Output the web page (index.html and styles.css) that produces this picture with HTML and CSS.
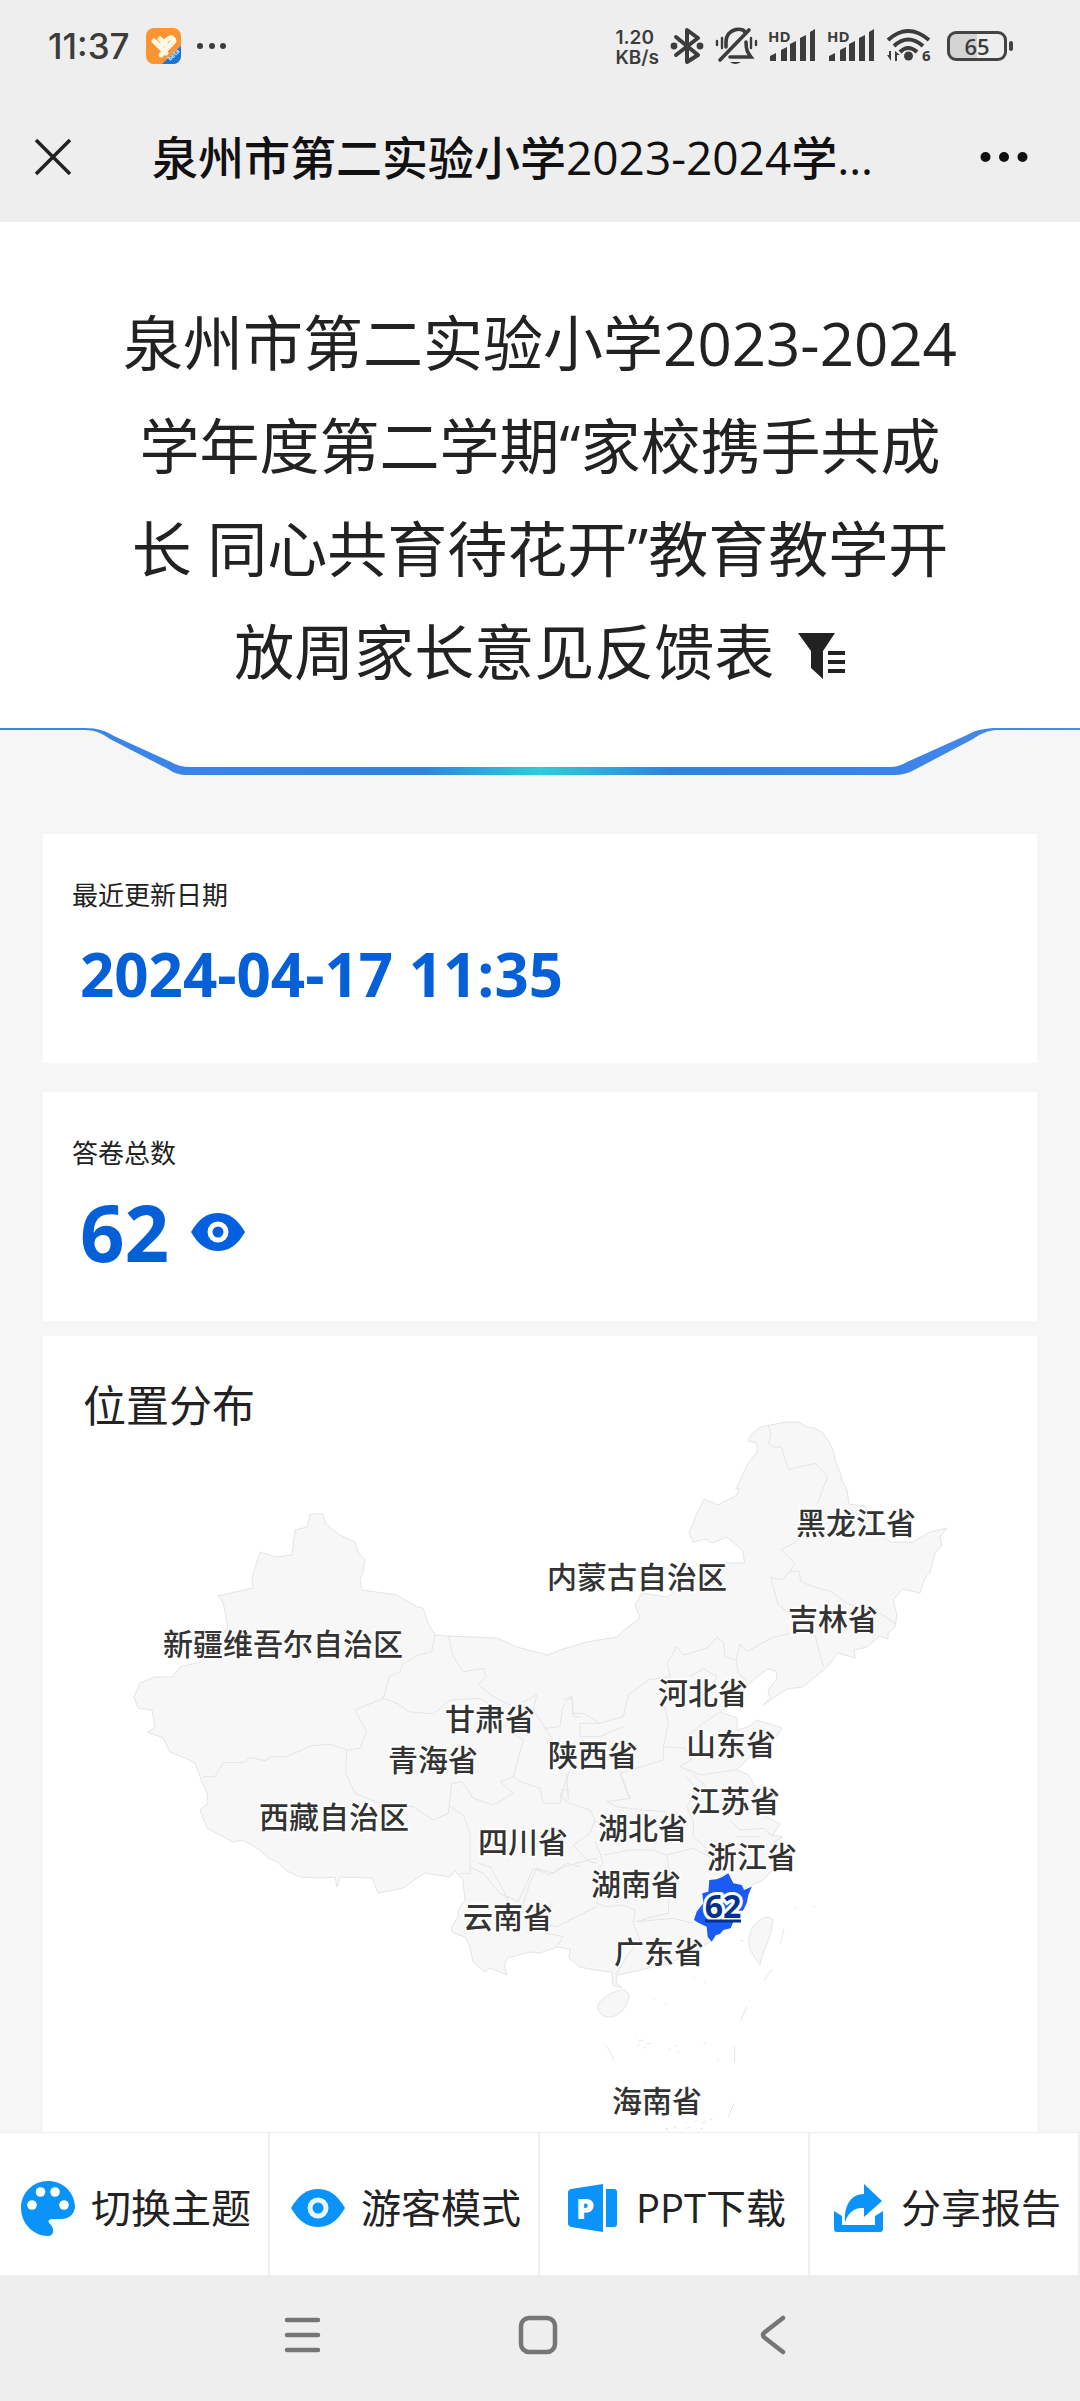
FILE: index.html
```html
<!DOCTYPE html>
<html lang="zh-CN">
<head>
<meta charset="utf-8">
<meta name="viewport" content="width=device-width, initial-scale=1">
<title>泉州市第二实验小学2023-2024学年度第二学期意见反馈表</title>
<link rel="stylesheet" href="styles.css">
</head>
<body>
<div class="status">
  <span class="status-time">11:37</span>
  <svg class="app-icon" viewBox="0 0 35 36" width="35" height="36">
    <defs><clipPath id="app"><rect width="35" height="36" rx="8"/></clipPath></defs>
    <g clip-path="url(#app)"><rect width="35" height="36" fill="#fb9431"/><path d="M15 37 36 17V37Z" fill="#1677d8"/>
    <path d="M8 13 20 25M14 11 22 19M15 27 28 13Q26 7 21 12L14 19" fill="none" stroke="#fff8e6" stroke-width="5" stroke-linecap="round" stroke-linejoin="round"/></g>
    <text class="beta" x="24" y="33" transform="rotate(-43 24 33)">beta</text>
  </svg>
  <svg viewBox="0 0 30 8" width="30" height="8" fill="#3c3c3c"><circle cx="3" cy="4" r="3"/><circle cx="15" cy="4" r="3"/><circle cx="26" cy="4" r="3"/></svg>
  <div class="status-right">
    <span class="speed"><span>1.20</span><span>KB/s</span></span>
    <svg viewBox="0 0 34 38" width="34" height="38"><path d="M6 10 28 28 17 35V3L28 11 6 28" fill="none" stroke="#3c3c3c" stroke-width="4" stroke-linejoin="round" stroke-linecap="round"/><circle cx="4" cy="19" r="3.4" fill="#3c3c3c"/><circle cx="30" cy="19" r="3.4" fill="#3c3c3c"/></svg>
    <svg viewBox="0 0 42 38" width="42" height="38" fill="none" stroke="#3c3c3c" stroke-width="3.6" stroke-linecap="round"><path d="M5 33 34 3M11 20V15C11 0 30 0 30 6M31 15C31 24 33 26 36 30H15"/><path d="M2 14V18M7 11V21M36 11V21M41 14V18" stroke-width="2.4"/><path d="M15 35H26Q20 39 15 35Z" fill="#3c3c3c" stroke="none"/></svg>
    <svg class="signal" viewBox="0 -4 48 44" width="48" height="44"><use href="#bars"/><text x="0" y="14">HD</text></svg>
    <svg class="signal" viewBox="0 -4 48 44" width="48" height="44"><g id="bars"><path d="M2 33V28L8 25V33ZM13 33V22L19 19V33ZM22 33V16L28 13V33ZM32 33V10L38 7V33ZM42 33V4L47 1V33Z"/></g><text x="0" y="14">HD</text></svg>
    <svg class="signal" viewBox="0 -1 46 42" width="46" height="42"><g fill="none" stroke="#3c3c3c" stroke-width="4"><path d="M2 14Q22-4 43 14M8 20Q22 7 37 20M14 26Q22 18 31 26"/></g><circle cx="22.500" cy="30" r="4.500"/><path d="M1 29H3V25H5V35ZM9 35V25L14 29H11V35Z"/><text x="36" y="35">6</text></svg>
    <span class="battery">65</span>
  </div>
</div>

<nav class="titlebar">
  <button class="plain" aria-label="关闭"><svg viewBox="0 0 38 38" width="38" height="38"><path d="M2 2 36 36M36 2 2 36" stroke="#222" stroke-width="3.500"/></svg></button>
  <div class="titlebar-text">泉州市第二实验小学2023-2024学年度第二学期意见反馈表</div>
  <button class="plain" aria-label="更多"><svg viewBox="0 0 48 12" width="48" height="12" fill="#111"><circle cx="5.500" cy="6" r="5"/><circle cx="24" cy="6" r="5"/><circle cx="42.500" cy="6" r="5"/></svg></button>
</nav>

<header class="hero">
  <h1>泉州市第二实验小学2023-2024学年度第二学期“家校携手共成长 同心共育待花开”教育教学开放周家长意见反馈表 <button class="plain filter" aria-label="筛选"><svg viewBox="0 0 48 46" width="48" height="46" fill="#222"><path d="M0 0H37L25 18V46L13 35V18ZM30 18H47V22H30ZM30 27H47V31H30ZM30 36H47V40H30Z"/></svg></button></h1>
</header>
<svg class="hero-edge" viewBox="0 0 1080 50">
  <defs><linearGradient id="edge" gradientUnits="userSpaceOnUse" x1="0" x2="1080" y1="0" y2="0"><stop offset="0" stop-color="#3f87e4"/><stop offset=".18" stop-color="#3a83ea"/><stop offset=".39" stop-color="#2f83de"/><stop offset=".5" stop-color="#28cfdc"/><stop offset=".62" stop-color="#2f83de"/><stop offset=".82" stop-color="#3a83ea"/><stop offset="1" stop-color="#4b8ce4"/></linearGradient></defs>
  <path d="M0 0H1080V3H998C985 3 978 6 970 11L912 37Q903 42 891 42H190Q178 42 170 37L112 11C104 6 98 3 85 3H0Z" fill="#fff"/>
  <path d="M0 2H85C98 2 106 5 114 10L171 36Q179 41 190 41H890Q899 41 907 36L967 9C976 4 984 2 998 2H1080V4H998C988 4 980 8 973 13L916 43Q906 49 894 49H187Q176 49 168 43L110 13C103 8 96 4 85 4H0Z" fill="url(#edge)"/>
</svg>

<main class="report">
  <section class="card stat">
    <h2>最近更新日期</h2>
    <p class="value">2024-04-17 11:35</p>
  </section>
  <section class="card stat">
    <h2>答卷总数</h2>
    <p class="value value-count">62 <button class="plain" aria-label="查看答卷"><svg viewBox="0 0 54 38" width="54" height="38"><path d="M0 19C8 5 17 0 27 0S46 5 54 19C46 33 37 38 27 38S8 33 0 19Z" fill="#0560e0"/><circle cx="27" cy="19" r="10.500" fill="#fff"/><circle cx="27" cy="19" r="5.500" fill="#0560e0"/></svg></button></p>
  </section>
  <section class="card place">
    <h2>位置分布</h2>
    <svg class="map" viewBox="43 1412 994 720" role="img" aria-label="中国地图，福建省 62">
      <g class="land">
        <path d="M310 1514 323 1514 325 1523 333 1530 340 1535 355 1542 358 1552 365 1560 363 1572 360 1580 362 1590 397 1595 417 1607 423 1608 428 1623 435 1635 448 1636 497 1638 517 1647 548 1655 560 1650 587 1642 617 1637 628 1627 640 1618 635 1605 642 1593 667 1597 690 1583 727 1563 745 1563 742 1550 727 1537 712 1543 706 1539 693 1542 689 1533 697 1513 704 1499 718 1505 737 1495 739 1488 736 1489 747 1465 757 1452 757 1443 748 1441 751 1435 760 1427 770 1425 787 1422 798 1422 807 1427 815 1428 823 1433 828 1440 833 1450 835 1460 840 1472 842 1481 847 1490 849 1504 865 1506 873 1520 890 1542 913 1542 930 1532 947 1528 940 1537 942 1545 935 1553 930 1573 925 1578 920 1593 903 1589 893 1600 897 1615 895 1627 888 1633 888 1639 880 1636 867 1647 854 1650 855 1658 838 1653 827 1667 803 1687 787 1689 763 1705 770 1698 768 1690 777 1679 776 1671 768 1669 753 1680 740 1690 730 1705 720 1712 737 1718 737 1730 748 1727 757 1720 782 1728 776 1737 764 1738 747 1760 737 1770 749 1775 753 1783 760 1795 767 1817 780 1824 773 1835 783 1837 774 1842 780 1863 763 1880 752 1885 743 1905 733 1920 718 1932 710 1942 690 1953 670 1963 653 1967 640 1970 627 1973 617 1975 616 1982 622 1988 613 1985 612 1972 595 1970 580 1967 569 1958 570 1949 557 1947 540 1953 530 1952 507 1958 504 1965 507 1975 490 1968 485 1972 473 1962 470 1947 465 1937 453 1933 451 1928 458 1917 458 1910 465 1900 463 1880 458 1875 455 1870 450 1877 425 1873 403 1888 378 1893 372 1878 340 1877 337 1887 335 1877 320 1878 300 1877 287 1871 277 1862 267 1857 260 1850 243 1840 233 1842 207 1828 200 1810 208 1803 207 1793 202 1782 195 1763 185 1758 170 1752 163 1738 147 1732 155 1728 152 1710 138 1708 134 1697 140 1683 155 1677 172 1677 180 1667 200 1662 228 1627 223 1602 218 1596 253 1588 252 1577 260 1552 276 1557 292 1555 295 1530 307 1527Z"/>
        <path d="M612 1993C620 1990 627 1987 629 1996C627 2012 613 2020 604 2016C595 2011 594 2002 612 1993ZM762 1919C770 1914 775 1919 772 1926C770 1940 764 1947 760 1965C752 1954 748 1948 749 1940C750 1929 754 1923 762 1919Z"/>
      </g>
      <g class="borders">
        <g transform="translate(100 1480) scale(.333333)">
          <path d="M1005 465 995 515 955 525 910 550 900 575 868 590 850 655 765 690 800 755 780 805 740 810 690 793 635 797 560 830 515 830 495 842 450 832 430 848 370 848 345 890 310 890M1045 467 1060 530 1090 575 1150 565 1158 590 1135 615 1180 650 1240 680 1310 645 1300 690 1335 745 1380 740 1388 680 1415 648 1420 710 1440 712M850 655 895 672 925 695 1000 702 1050 660 1140 655 1180 680M740 810 737 880 765 940 840 970 940 980 1000 1020 1045 1000 1055 910 1085 905 1120 955 1180 975 1240 940 1200 905 1240 890 1270 780 1240 760M1050 980 1090 1005 1110 1060 1110 1180 1080 1180M1240 890 1260 905 1320 925 1330 970 1380 970 1390 930 1410 930M1110 1160 1150 1180 1200 1240 1255 1265 1280 1210 1300 1165 1350 1185 1400 1150 1440 1160M1335 745 1365 790"/>
        </g>
        <g transform="translate(560 1400) scale(.333333)">
          <path d="M625 75 633 105 625 130 640 140 665 142 685 208 765 190 803 230 772 310M750 395 700 430 663 450 690 475 705 490 690 515 718 515 722 545 760 560 815 575 860 610 915 630 960 640 1005 670M690 515 665 540 632 532 655 615 690 640M690 700 640 712 560 755 540 732 528 780 495 770 490 725 470 712 440 745 370 765 350 740 322 790 330 830 265 840 205 885 190 950 120 970 70 940 40 940 35 890 10 900M765 705 790 800M528 780 535 820 560 840M330 830 310 900 325 970 310 1040 310 1080 180 1120 205 1190M120 970 60 970 60 1010 120 1010 190 980M310 1040 375 1045 395 1080 360 1100 420 1125 530 1110M400 1125 440 1160 395 1190M390 830 430 805 470 830 460 855M380 1010 430 970 480 935M20 1120 25 1200"/>
        </g>
        <g transform="translate(440 1740) scale(.333333)">
          <path d="M390 90 360 170 390 190 450 210 465 240 450 280 400 315 440 360 470 355M540 95 570 175 500 185 530 200 610 210 680 215M460 240 500 260M740 110 770 150 740 200 760 245 760 290 800 325M465 305 480 340 490 370 470 395 480 430 470 490 500 500 550 495 585 510M490 345 570 330 640 330 680 345 690 400 685 520 640 530 590 545M680 345 760 325 810 350M270 430 290 385 340 400 370 380 440 362 470 370M115 370 150 380 190 450 215 510 250 490 270 430M215 510 270 520 290 550 350 560 410 530 470 500M290 550 320 580 370 590 350 620M585 510 580 550 600 600 560 650 530 700M590 545 700 535 760 550M870 240 900 270 970 265 1000 290M890 290 960 290M495 915Q512 930 520 960M972 722 998 686M1022 610 1032 565M902 842 920 800M884 920V968M865 1130 882 1090M900 600 910 603M762 712 766 715M792 725 798 729M675 790H680M640 775 645 778M585 880 588 884M595 905 605 900 612 906M590 918 597 912M620 912 632 910M612 922 618 925M685 925 692 930M705 918 714 916M712 935H716M790 908 798 911M830 957 835 959M675 1168 685 1164M700 1160 710 1165M735 1150 742 1145M765 1145 770 1140M785 1150 797 1145M740 1165 750 1162M780 1165 790 1168M810 1140 818 1135M1062 500 1068 505M1120 500H1126"/>
        </g>
      </g>
      <path class="active" transform="translate(440 1740) scale(.333333)" d="M865 400 880 430 905 435 912 450 935 440 925 465 920 490 905 520 880 545 872 565 850 570 840 582 828 585 815 605 803 590 800 560 775 548 762 540 770 515 790 490 787 460 805 455 808 420 830 418 845 412Z"/>
      <g class="labels">
        <text x="856" y="1534">黑龙江省</text><text x="637" y="1588">内蒙古自治区</text><text x="833" y="1630">吉林省</text>
        <text x="283" y="1655">新疆维吾尔自治区</text><text x="703" y="1704">河北省</text><text x="490" y="1730">甘肃省</text>
        <text x="731" y="1755">山东省</text><text x="593" y="1766">陕西省</text><text x="433" y="1771">青海省</text>
        <text x="735" y="1812">江苏省</text><text x="334" y="1828">西藏自治区</text><text x="643" y="1839">湖北省</text>
        <text x="523" y="1853">四川省</text><text x="752" y="1868">浙江省</text><text x="636" y="1895">湖南省</text>
        <text x="508" y="1928">云南省</text><text x="659" y="1963">广东省</text><text x="657" y="2112">海南省</text>
      </g>
      <text class="active-count" x="723" y="1918">62</text>
      <path d="M705 1921H741" stroke="#04318f" stroke-width="3"/>
    </svg>
  </section>
</main>

<div class="toolbar">
  <button><svg viewBox="0 0 54 56" width="54" height="56"><path d="M27 1C12 1 0 13 0 28S12 56 27 56C33 56 34 49 29 44C26 41 28 39 32 39H40C49 39 54 33 54 26C53 11 41 1 27 1Z" fill="#0a93fb"/><g fill="#fff"><circle cx="11" cy="25" r="4.800"/><circle cx="19.500" cy="12" r="4.800"/><circle cx="34" cy="12" r="4.800"/><circle cx="43" cy="25" r="4.800"/></g></svg>切换主题</button>
  <button><svg viewBox="0 0 54 56" width="54" height="56"><path d="M0 28C8 14 17 9 27 9S46 14 54 28C46 42 37 47 27 47S8 42 0 28Z" fill="#0a93fb"/><circle cx="27" cy="28" r="10.500" fill="#e6f8ff"/><circle cx="27" cy="28" r="5.500" fill="#0a93fb"/></svg>游客模式</button>
  <button><svg viewBox="0 0 54 56" width="54" height="56"><path d="M5 9 37 4V52L5 47Q2 46 2 44V12Q2 10 5 9ZM40 9H48Q51 9 51 12V44Q51 47 48 47H40Z" fill="#0a93fb"/><text class="ppt-mark" x="10" y="39">P</text></svg>PPT下载</button>
  <button><svg viewBox="0 0 54 56" width="54" height="56" fill="#0a93fb"><path d="M33 4 51 21 33 37V28C23 27 17 33 14 42C13 25 20 14 33 14Z"/><path d="M3 31 11 36V45H44V36L52 31V49Q52 52 49 52H6Q3 52 3 49Z"/></svg>分享报告</button>
</div>

<div class="sysnav">
  <button class="plain" aria-label="最近任务"><svg viewBox="0 0 40 40" width="40" height="40" stroke="#767676" stroke-width="4.500" stroke-linecap="round"><path d="M5 5H36M5 20H36M5 35H36"/></svg></button>
  <button class="plain" aria-label="主屏幕"><svg viewBox="0 0 40 40" width="40" height="40" fill="none" stroke="#767676" stroke-width="4.500"><rect x="3" y="3" width="34" height="34" rx="8"/></svg></button>
  <button class="plain" aria-label="返回"><svg viewBox="0 0 40 40" width="40" height="40" fill="none" stroke="#767676" stroke-width="4.500" stroke-linecap="round" stroke-linejoin="round"><path d="M29 3 11 17Q7 20 11 23L29 37"/></svg></button>
</div>
</body>
</html>
```
FILE: styles.css
```css
* { box-sizing: border-box; }
body {
  margin: 0;
  background: #f6f6f6;
  color: #222;
  font-family: "Open Sans", "Noto Sans CJK SC", sans-serif;
}
svg { display: block; flex: none; overflow: visible; }
h1, h2, p { margin: 0; font-weight: 400; }
button { font: inherit; color: inherit; cursor: pointer; }
.plain { border: 0; padding: 0; background: none; }

.status {
  display: flex;
  align-items: center;
  gap: 16px;
  height: 92px;
  padding: 0 67px 0 48px;
  background: #eee;
  color: #3c3c3c;
}
.status-time { font: 500 35px/48px Inter, sans-serif; }
.beta { font: 700 6px "Open Sans", sans-serif; fill: #d5ebff; }
.status-right { display: flex; align-items: center; gap: 11px; margin-left: auto; }
.speed {
  display: grid;
  grid-template-rows: 20px 20px;
  padding-top: 4px;
  font: 600 19px/20px Inter, sans-serif;
}
.signal { fill: #3c3c3c; }
.signal text { font: 700 15px "Open Sans", sans-serif; }
.battery {
  position: relative;
  width: 60px;
  height: 30px;
  margin: 0 6px 0 4px;
  border: 3px solid #444;
  border-radius: 9px;
  background: linear-gradient(90deg, #d4d4d4 50%, #eee 50%);
  text-align: center;
  font-size: 22px;
  line-height: 24px;
  font-weight: 600;
}
.battery::after {
  content: "";
  position: absolute;
  right: -9px;
  top: 7px;
  width: 4px;
  height: 10px;
  border-radius: 2px;
  background: #444;
}

.titlebar {
  display: flex;
  align-items: center;
  gap: 80px;
  height: 130px;
  padding: 0 52px 0 34px;
  background: #eee;
  color: #111;
}
.titlebar-text {
  flex: 1;
  min-width: 0;
  overflow: hidden;
  white-space: nowrap;
  text-overflow: ellipsis;
  font-size: 46px;
  line-height: 64px;
  font-weight: 500;
}

.hero { padding: 70px 112px 22px; background: #fff; }
.hero h1 { font-size: 60px; line-height: 103px; text-align: center; }
.filter {
  display: inline-block;
  height: 46px;
  margin-left: 8px;
  vertical-align: -4px;
  line-height: 1;
}
.hero-edge { width: 100%; height: auto; }

.report { padding: 58px 43px 0; }
.card { background: #fff; }
.stat { height: 229px; margin-bottom: 29px; padding: 42px 29px 0; }
.stat h2 { font-size: 26px; line-height: 38px; }
.value {
  margin-top: 6px;
  padding-left: 8px;
  color: #0560d8;
  font-size: 60px;
  line-height: 108px;
  font-weight: 700;
}
.value-count { display: flex; align-items: center; gap: 22px; font-size: 78px; }
.stat + .place { margin-top: -14px; }
.place h2 { padding: 44px 40px 0; font-size: 43px; line-height: 52px; }
.map { width: 100%; height: auto; margin-top: -20px; }
.land path { fill: #f7f7f7; stroke: #e4e4e4; stroke-width: 1; stroke-linejoin: round; }
.borders path { fill: none; stroke: #e4e4e4; stroke-width: 3; stroke-linejoin: round; }
.active { fill: #1b5bf5; }
.labels text {
  font-family: "Noto Sans CJK SC", sans-serif;
  font-size: 30px;
  font-weight: 500;
  text-anchor: middle;
  fill: #333;
  stroke: #fff;
  stroke-width: 3px;
  paint-order: stroke;
}
.active-count {
  font-size: 32px;
  font-weight: 700;
  text-anchor: middle;
  fill: #04318f;
  stroke: #fff;
  stroke-width: 6px;
  paint-order: stroke;
}

.toolbar {
  display: grid;
  grid-template-columns: repeat(4, 1fr);
  position: relative;
  border-top: 1px solid #eee;
  background: #fff;
}
.toolbar button {
  display: flex;
  align-items: center;
  justify-content: center;
  gap: 16px;
  height: 142px;
  padding: 8px 0 0 4px;
  border: 0;
  border-right: 2px solid #eee;
  background: #fff;
  font-size: 40px;
  line-height: 56px;
  white-space: nowrap;
}
.ppt-mark { font: 800 29px "Open Sans", sans-serif; fill: #fff; }
.sysnav {
  display: flex;
  justify-content: center;
  gap: 196px;
  height: 126px;
  padding: 40px 5px 0 0;
  background: #eee;
}
.sysnav button { height: 40px; }
```
